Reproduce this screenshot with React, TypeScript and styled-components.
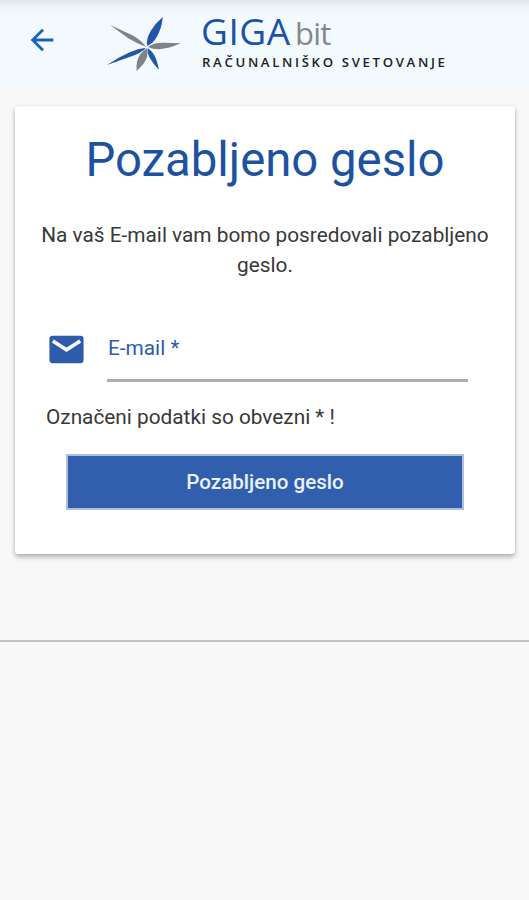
import React from "react";
import styled, { createGlobalStyle } from "styled-components";

const GlobalStyle = createGlobalStyle`
  * { box-sizing: border-box; }
  body { margin: 0; background: #f8f8f8; font-family: Roboto, sans-serif; }
`;

const Screen = styled.div`
  height: 900px;
  overflow: hidden;
  background: #f8f8f8;
`;

const Header = styled.header`
  display: flex;
  align-items: flex-start;
  height: 88px;
  background: linear-gradient(#dfe4ec 0, #edf3f9 6px, #f2fafe 16px, #f2fafe 100%);
`;

const BackButton = styled.button`
  flex: none;
  width: 34px;
  height: 34px;
  margin: 23px 0 0 25px;
  padding: 0;
  border: 0;
  background: none;
  color: #1763ba;
  svg { display: block; width: 34px; height: 34px; }
`;

const Star = styled.svg`
  flex: none;
  width: 100px;
  height: 75px;
  margin: 5px 0 0 36px;
`;

const Brand = styled.div`
  padding: 11px 0 0 6px;
  white-space: nowrap;
  font-family: "Open Sans", "Noto Sans", sans-serif;
`;

const BrandName = styled.div`
  display: flex;
  align-items: baseline;
  height: 40px;
  line-height: 40px;
`;

const Giga = styled.span`
  width: 94px;
  color: #1d50a8;
  font-size: 37px;
  letter-spacing: 0.5px;
`;

const Bit = styled.span`
  color: #85878b;
  font-size: 31px;
  font-weight: 400;
  letter-spacing: -0.8px;
`;

const Tagline = styled.div`
  height: 20px;
  padding-left: 1px;
  color: #202226;
  font-size: 13.2px;
  font-weight: 600;
  line-height: 22px;
  letter-spacing: 2.65px;
`;

const Card = styled.main`
  height: 448px;
  margin: 18px 14px 0 15px;
  padding-top: 26px;
  border-radius: 3px;
  background: #fff;
  box-shadow: 0 3px 5px rgba(0, 0, 0, 0.28), 0 0 3px rgba(0, 0, 0, 0.08);
`;

const Title = styled.h1`
  margin: 0;
  color: #1d52a0;
  font-size: 47.3px;
  font-weight: 370;
  line-height: 56px;
  text-align: center;
  white-space: nowrap;
`;

const Intro = styled.p`
  margin: 32px 20px 0;
  color: #383838;
  font-size: 20.8px;
  line-height: 30px;
  text-align: center;
`;

const Field = styled.label`
  display: flex;
  height: 59px;
  margin: 43px 47px 0 31px;
  color: #2d5cac;
  svg { flex: none; width: 41px; height: 41px; margin-top: 6px; }
`;

const Label = styled.span`
  flex: 1;
  height: 59px;
  margin-left: 20px;
  padding-left: 1px;
  border-bottom: 3px solid #adadad;
  font-size: 20.8px;
  line-height: 50px;
`;

const Note = styled.p`
  margin: 19px 0 0 31px;
  color: #383838;
  font-size: 20.8px;
  line-height: 32px;
`;

const Submit = styled.button`
  display: block;
  width: 398px;
  height: 56px;
  margin: 21px 0 0 51px;
  padding: 0;
  border: 2px solid #b0bfd9;
  background: #315fae;
  color: #e8f3ff;
  font: 500 20.6px Roboto, sans-serif;
`;

const Divider = styled.hr`
  height: 2px;
  margin: 86px 0 0;
  border: 0;
  background: #c2c2c2;
`;

export default function App() {
  return (
    <>
      <GlobalStyle />
      <Screen>
        <Header>
          <BackButton aria-label="Nazaj">
            <svg viewBox="0 0 24 24" fill="currentColor">
              <path d="M20 11H7.83l5.59-5.59L12 4l-8 8 8 8 1.41-1.41L7.83 13H20v-2z" />
            </svg>
          </BackButton>
          <Star viewBox="0 0 300 225">
            <path fill="#808286" d="M45 60L112 91Q136 104 154 126Q124 115 100 100Z" />
            <path fill="#2356a8" d="M203 36Q201 70 183 100Q175 114 157 123Q152 103 167 78Q180 56 203 36Z" />
            <path fill="#808286" d="M159 126Q175 112 207 113L257 115Q222 131 191 133Q172 133 159 126Z" />
            <path fill="#2356a8" d="M153 128Q139 145 103 156L36 180Q68 158 104 142Q129 130 153 128Z" />
            <path fill="#808286" d="M156 130Q162 156 145 177L125 198Q122 168 135 149Q143 137 156 130Z" />
            <path fill="#2356a8" d="M158 129Q178 144 184 164Q189 180 192 194Q174 177 163 157Q156 144 158 129Z" />
          </Star>
          <Brand>
            <BrandName>
              <Giga>GIGA</Giga>
              <Bit>bit</Bit>
            </BrandName>
            <Tagline>RAČUNALNIŠKO SVETOVANJE</Tagline>
          </Brand>
        </Header>
        <Card>
          <Title>Pozabljeno geslo</Title>
          <Intro>Na vaš E-mail vam bomo posredovali pozabljeno geslo.</Intro>
          <Field>
            <svg viewBox="0 0 24 24">
              <rect x="2" y="4" width="20" height="16" rx="1.8" fill="currentColor" />
              <path d="M4 7l8 5.2 8-5.2" fill="none" stroke="#fff" strokeWidth="2.1" />
            </svg>
            <Label>E-mail *</Label>
          </Field>
          <Note>Označeni podatki so obvezni * !</Note>
          <Submit>Pozabljeno geslo</Submit>
        </Card>
        <Divider />
      </Screen>
    </>
  );
}
